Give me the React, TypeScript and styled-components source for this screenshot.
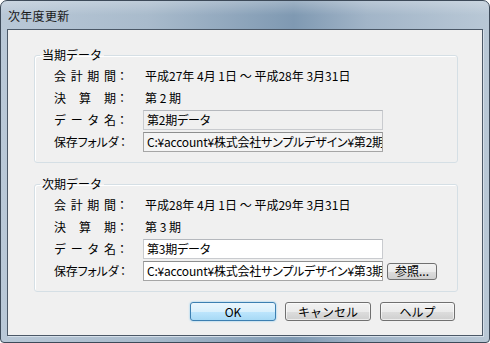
import styled, {createGlobalStyle} from "styled-components"

const GlobalStyle = createGlobalStyle`
  html, body {
    margin: 0;
    padding: 0;
    background: #ffffff;
  }
  body {
    font-family: "Noto Sans CJK JP", "Liberation Sans", sans-serif;
    font-size: 12px;
    color: #000;
  }
`

type Field = {
  label: string
  value?: string
  input?: {text: string; tone: "disabled" | "readonly" | "normal"; strong?: boolean}
  browse?: boolean
}

const current: Field[] = [
  {label: "会計期間", value: "平成27年 4月 1日 ～ 平成28年 3月31日"},
  {label: "決算期", value: "第 2 期"},
  {label: "データ名", input: {text: "第2期データ", tone: "disabled"}},
  {
    label: "保存フォルダ",
    input: {text: "C:¥account¥株式会社サンプルデザイン¥第2期", tone: "readonly", strong: true},
  },
]

const next: Field[] = [
  {label: "会計期間", value: "平成28年 4月 1日 ～ 平成29年 3月31日"},
  {label: "決算期", value: "第 3 期"},
  {label: "データ名", input: {text: "第3期データ", tone: "normal"}},
  {
    label: "保存フォルダ",
    input: {text: "C:¥account¥株式会社サンプルデザイン¥第3期", tone: "normal", strong: true},
    browse: true,
  },
]

function SpreadLabel({text}: {text: string}) {
  const tight = text.length > 4
  return (
    <Label>
      <LabelText $tight={tight}>
        {tight ? text : text.split("").map((c, i) => <span key={i}>{c}</span>)}
      </LabelText>
      <Colon>：</Colon>
    </Label>
  )
}

function Group({title, fields}: {title: string; fields: Field[]}) {
  return (
    <GroupBox>
      <Caption>{title}</Caption>
      <Rows>
        {fields.map((f) => (
          <Row key={f.label}>
            <SpreadLabel text={f.label} />
            {f.value && <Value>{f.value}</Value>}
            {f.input && (
              <TextBox $tone={f.input.tone} $strong={f.input.strong}>
                {f.input.text}
              </TextBox>
            )}
            {f.browse && <BrowseButton>参照...</BrowseButton>}
          </Row>
        ))}
      </Rows>
    </GroupBox>
  )
}

export default function App() {
  return (
    <>
      <GlobalStyle />
      <Window>
        <TitleBar>次年度更新</TitleBar>
        <Client>
          <Group title="当期データ" fields={current} />
          <Group title="次期データ" fields={next} />
          <ButtonBar>
            <Button $primary>OK</Button>
            <Button>キャンセル</Button>
            <Button $narrow>ヘルプ</Button>
          </ButtonBar>
        </Client>
      </Window>
    </>
  )
}

const Window = styled.div`
  width: 490px;
  height: 343px;
  box-sizing: border-box;
  border: 1px solid #3d4a59;
  border-radius: 7px 7px 4px 4px;
  padding: 0 6px 6px 6px;
  display: flex;
  flex-direction: column;
  background:
    linear-gradient(180deg, rgba(255, 255, 255, 0.25) 0px, rgba(255, 255, 255, 0) 14px),
    linear-gradient(
      90deg,
      #b9c8d7 0%,
      #a9bbcc 30%,
      #8aa2b9 52%,
      #7f99b2 60%,
      #a2b5c8 75%,
      #b9c8d6 100%
    );
  overflow: hidden;
`

const TitleBar = styled.div`
  height: 28px;
  display: flex;
  align-items: center;
  padding-left: 1px;
  font-size: 12px;
  color: #1a1a1a;
  letter-spacing: 0.3px;
`

const Client = styled.div`
  flex: 1;
  border: 1px solid #4b5867;
  box-shadow: 1px 1px 0 #d6e0ea;
  background: #f0f0f0;
  padding: 17px 24px 0 26px;
  display: flex;
  flex-direction: column;
  gap: 13px;
`

const GroupBox = styled.fieldset`
  margin: 0;
  padding: 0 0 10px 19px;
  min-inline-size: 0;
  border: 1px solid #d5dfe5;
  border-radius: 3px;
  box-shadow: inset 1px 1px 0 #ffffff;
`

const Caption = styled.legend`
  padding: 0 2px;
  margin-left: -14px;
  line-height: 16px;
  font-size: 12px;
`

const Rows = styled.div`
  display: flex;
  flex-direction: column;
  gap: 2px;
  padding-top: 3px;
`

const Row = styled.div`
  height: 20px;
  display: flex;
  align-items: center;
`

const Label = styled.div`
  width: 74px;
  margin-right: 15px;
  display: flex;
  align-items: center;
  line-height: 14px;
  white-space: nowrap;
`

const LabelText = styled.div<{$tight?: boolean}>`
  width: 63px;
  display: flex;
  justify-content: space-between;
  font-feature-settings: ${(p) => (p.$tight ? '"palt"' : "normal")};
  letter-spacing: ${(p) => (p.$tight ? "-0.2px" : "0")};
`

const Colon = styled.span`
  margin-left: auto;
`

const Value = styled.div`
  padding-left: 2px;
  line-height: 14px;
  white-space: nowrap;
`

const TextBox = styled.div<{$tone: "disabled" | "readonly" | "normal"; $strong?: boolean}>`
  width: 240px;
  height: 20px;
  box-sizing: border-box;
  padding: 0 3px;
  display: flex;
  align-items: center;
  overflow: hidden;
  white-space: nowrap;
  line-height: 14px;
  font-feature-settings: "palt";
  letter-spacing: -0.2px;
  border: 1px solid ${(p) => (p.$strong ? "#a6a6a6" : "#c9cbcf")};
  border-top-color: ${(p) => (p.$strong ? "#8e8f8f" : "#b5b8bd")};
  background: ${(p) => (p.$tone === "normal" ? "#ffffff" : p.$tone === "readonly" ? "#f4f4f4" : "#f0f0f0")};
`

const BrowseButton = styled.div`
  margin-left: 4px;
  width: 50px;
  height: 17px;
  box-sizing: border-box;
  border: 1px solid #707070;
  border-radius: 3px;
  background: linear-gradient(180deg, #f2f2f2 0%, #ebebeb 50%, #dddddd 51%, #cfcfcf 100%);
  display: flex;
  align-items: center;
  justify-content: center;
  font-size: 12px;
  line-height: 14px;
`

const ButtonBar = styled.div`
  margin-top: -3px;
  padding-right: 3px;
  display: flex;
  justify-content: flex-end;
  gap: 9px;
`

const Button = styled.div<{$primary?: boolean; $narrow?: boolean}>`
  width: ${(p) => (p.$narrow ? "75px" : "86px")};
  height: 19px;
  box-sizing: border-box;
  border-radius: 3px;
  border: 1px solid ${(p) => (p.$primary ? "#3c7fb1" : "#707070")};
  background: ${(p) =>
    p.$primary
      ? "linear-gradient(180deg, #eaf6fd 0%, #d9f0fc 50%, #bee6fd 51%, #a7d9f5 100%)"
      : "linear-gradient(180deg, #f2f2f2 0%, #ebebeb 50%, #dddddd 51%, #cfcfcf 100%)"};
  box-shadow: ${(p) => (p.$primary ? "0 0 2px #6fc3f0" : "inset 0 0 0 1px rgba(255,255,255,0.6)")};
  display: flex;
  align-items: center;
  justify-content: center;
  line-height: 14px;
  font-size: 12px;
`
